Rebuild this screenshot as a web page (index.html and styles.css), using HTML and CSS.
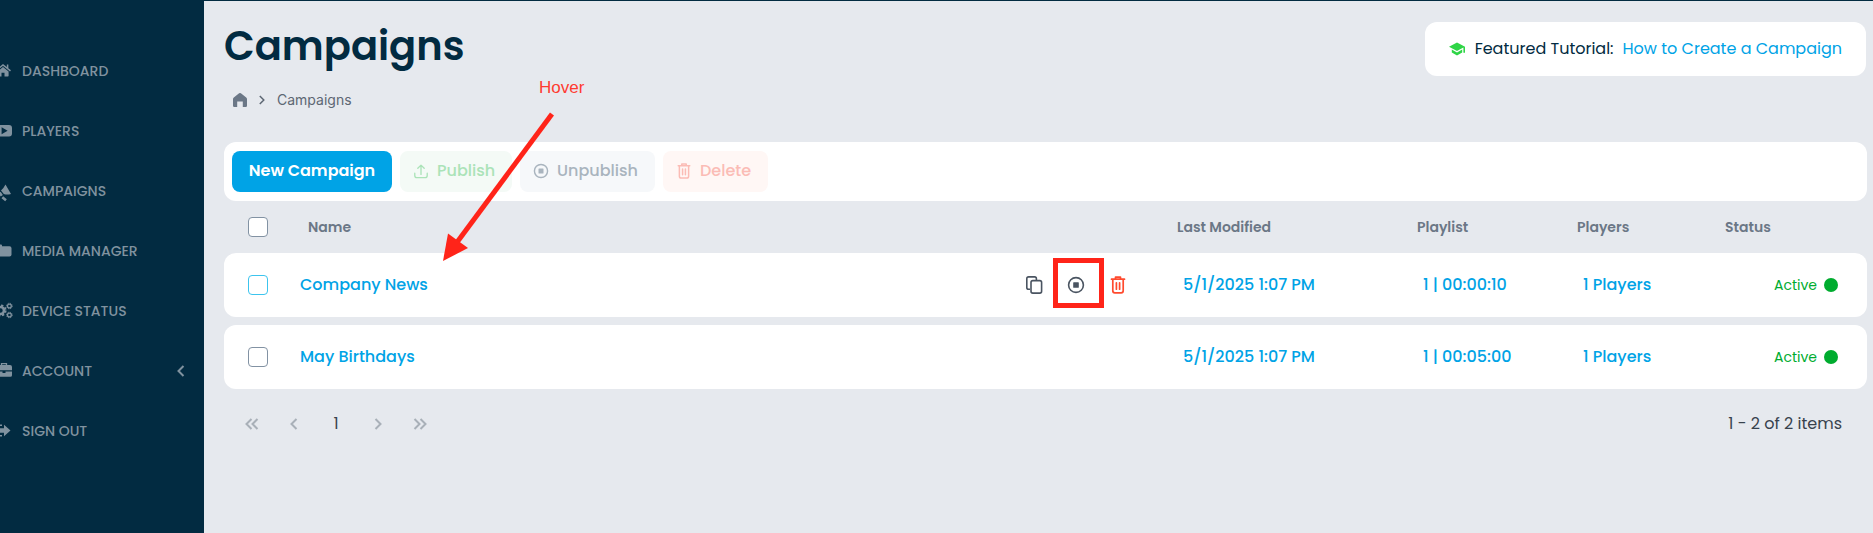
FILE: index.html
```html
<!DOCTYPE html>
<html lang="en">
<head>
<meta charset="utf-8">
<meta name="viewport" content="width=device-width, initial-scale=1">
<title>Campaigns</title>
<link rel="stylesheet" href="styles.css">
</head>
<body>
<svg width="0" height="0" class="sprite" aria-hidden="true">
  <symbol id="i-stop" viewBox="0 0 18 18"><circle cx="9" cy="9" r="7.4" fill="none" stroke="currentColor" stroke-width="1.6"/><rect x="6.2" y="6.2" width="5.6" height="5.6" rx=".6" fill="currentColor"/></symbol>
  <symbol id="i-trash" viewBox="0 0 18 18"><path d="M2.500 3.200h13M6.500 2.400V1.200h5v1.200M3.800 3.400v11.400a2 2 0 0 0 2 2h6.400a2 2 0 0 0 2-2V3.400M7.400 6.800v6.400M10.600 6.800v6.400" fill="none" stroke="currentColor" stroke-width="1.700" stroke-linecap="round" stroke-linejoin="round"/></symbol>
  <symbol id="i-copy" viewBox="0 0 18 18"><path d="M5 13.200H3.600a1.800 1.800 0 0 1-1.800-1.800V2.700A1.800 1.800 0 0 1 3.600.9h6a1.800 1.800 0 0 1 1.800 1.800v1.500" fill="none" stroke="currentColor" stroke-width="1.600"/><rect x="6" y="4.600" width="10.600" height="12.500" rx="1.800" fill="none" stroke="currentColor" stroke-width="1.600"/></symbol>
  <symbol id="i-upload" viewBox="0 0 18 18"><path d="M2 11.500v2.500a2.500 2.500 0 0 0 2.500 2.500h9a2.500 2.500 0 0 0 2.500-2.500v-2.500M9 12.800V2.500M5.400 6 9 2.400 12.600 6" fill="none" stroke="currentColor" stroke-width="1.500" stroke-linecap="round" stroke-linejoin="round"/></symbol>
  <symbol id="i-left" viewBox="0 0 18 18"><path d="M11.500 4 6.500 9l5 5" fill="none" stroke="currentColor" stroke-width="2"/></symbol>
  <symbol id="i-right" viewBox="0 0 18 18"><path d="m6.500 4 5 5-5 5" fill="none" stroke="currentColor" stroke-width="2"/></symbol>
  <symbol id="i-first" viewBox="0 0 18 18"><path d="M8.500 4l-5 5 5 5M14.500 4l-5 5 5 5" fill="none" stroke="currentColor" stroke-width="2"/></symbol>
  <symbol id="i-last" viewBox="0 0 18 18"><path d="m3.500 4 5 5-5 5M9.500 4l5 5-5 5" fill="none" stroke="currentColor" stroke-width="2"/></symbol>
</svg>
<div class="app">
  <nav class="sidebar" aria-label="Main">
    <a class="nav-item" href="#"><svg class="nav-icon" viewBox="0 0 18 16"><path d="M9 4 3.600 8.600V12.700q0 .7.700.700H7.500v-3.700h3v3.700h3.400q.7 0 .7-.7V8.600z"/><path d="m1.800 7.800L9 1.900l7.500 6M13.600 1.500V5" fill="none" stroke="currentColor" stroke-width="1.500"/></svg>DASHBOARD</a>
    <a class="nav-item" href="#"><svg class="nav-icon" viewBox="0 0 18 16"><path fill-rule="evenodd" d="M3 2h12a3 3 0 0 1 3 3v5.400a3 3 0 0 1-3 3H3a3 3 0 0 1-3-3V5a3 3 0 0 1 3-3zM7.600 4.200v7l6-3.500z"/></svg>PLAYERS</a>
    <a class="nav-item" href="#"><svg class="nav-icon" viewBox="0 0 18 16"><path d="M11.500 1.500 17 11Q13 12 9.800 11L7 7.500Q9.500 5.500 11.500 1.500z"/><path d="M5.500 9.500l2.300 3.200M8.300 14.300l3.700 3" fill="none" stroke="currentColor" stroke-width="2.600"/></svg>CAMPAIGNS</a>
    <a class="nav-item" href="#"><svg class="nav-icon" viewBox="0 0 18 16"><path d="M2 1.500h5q1 0 1 1v.7h7.500a2 2 0 0 1 2 2v6.300a2 2 0 0 1-2 2H2a2 2 0 0 1-2-2v-8a2 2 0 0 1 2-2z"/></svg>MEDIA MANAGER</a>
    <a class="nav-item" href="#"><svg class="nav-icon nav-icon-wide" viewBox="0 0 19 16"><g fill="none" stroke="currentColor"><circle cx="6.500" cy="7.500" r="3.500" stroke-width="2.600"/><circle cx="6.500" cy="7.500" r="5.200" stroke-width="1.800" stroke-dasharray="2.300 1.780"/><circle cx="15.400" cy="3" r="1.900" stroke-width="1.300"/><circle cx="15.400" cy="3" r="2.800" stroke-width="1" stroke-dasharray="1.200 1"/><circle cx="15.400" cy="12" r="1.900" stroke-width="1.300"/><circle cx="15.400" cy="12" r="2.800" stroke-width="1" stroke-dasharray="1.200 1"/></g></svg>DEVICE STATUS</a>
    <a class="nav-item" href="#"><svg class="nav-icon" viewBox="0 0 18 16"><path d="M7.500 2V.6h5V2" fill="none" stroke="currentColor" stroke-width="1.300"/><path d="M2 2h14a2 2 0 0 1 2 2v3.200H0V4a2 2 0 0 1 2-2zM0 8.400h8.500v1.600h3V8.400H18v3.800a1.600 1.600 0 0 1-1.600 1.600H1.600A1.600 1.600 0 0 1 0 12.200z"/></svg>ACCOUNT<svg class="nav-caret" viewBox="0 0 18 18"><use href="#i-left"/></svg></a>
    <a class="nav-item" href="#"><svg class="nav-icon" viewBox="0 0 18 16"><path d="M10 1.800 16.500 7.500l-6.500 5.700v-3.500H4V5.300h6z"/><path d="M8 2.300H2.500v10.500H8" fill="none" stroke="currentColor" stroke-width="1.600"/></svg>SIGN OUT</a>
  </nav>
  <main class="main">
    <header class="page-head">
      <div>
        <h1 class="title">Campaigns</h1>
        <nav class="crumbs" aria-label="Breadcrumb">
          <a class="crumb-home" href="#" aria-label="Home"><svg width="14" height="14" viewBox="0 0 14 14"><path d="M7 0q.5 0 .9.300L13.200 4.500q.8.600.8 1.600v6.700q0 1.200-1.200 1.200H9.800V8.600H4.200V14h-3Q0 14 0 12.800V6.100q0-1 .8-1.600L6.100.3Q6.500 0 7 0z" fill="currentColor"/></svg></a>
          <svg class="crumb-sep" viewBox="0 0 6 10"><path d="m.8 1 4 4-4 4" fill="none" stroke="currentColor" stroke-width="1.500"/></svg>
          <span>Campaigns</span>
        </nav>
      </div>
      <div class="tutorial">
        <svg class="tutorial-icon" viewBox="0 0 16 14"><path d="M8 .5 0 4.800l8 4.300 6.400-3.500v5.100H16V4.800zM2.800 7.500v3L8 13.500l5.200-3v-3L8 10.400z" fill="currentColor"/></svg>
        <span>Featured Tutorial:</span>
        <a href="#">How to Create a Campaign</a>
      </div>
    </header>
    <div class="toolbar">
      <button class="btn btn-new" type="button">New Campaign</button>
      <button class="btn btn-publish" type="button" disabled><svg class="btn-icon"><use href="#i-upload"/></svg>Publish</button>
      <button class="btn btn-unpublish" type="button" disabled><svg class="btn-icon"><use href="#i-stop"/></svg>Unpublish</button>
      <button class="btn btn-delete" type="button" disabled><svg class="btn-icon"><use href="#i-trash"/></svg>Delete</button>
    </div>
    <table class="grid">
      <colgroup><col class="c-check"><col><col class="c-actions"><col class="c-modified"><col class="c-playlist"><col class="c-players"><col class="c-status"></colgroup>
      <thead>
        <tr><th class="check"><input type="checkbox" aria-label="Select all"></th><th class="name">Name</th><th></th><th>Last Modified</th><th>Playlist</th><th>Players</th><th>Status</th></tr>
      </thead>
      <tbody>
        <tr>
          <td class="check"><input class="is-hover" type="checkbox" aria-label="Select Company News"></td>
          <td class="name"><a href="#">Company News</a></td>
          <td class="actions"><div class="action-list">
            <button class="action" type="button" aria-label="Copy"><svg><use href="#i-copy"/></svg></button>
            <button class="action marked" type="button" aria-label="Unpublish"><svg><use href="#i-stop"/></svg></button>
            <button class="action danger" type="button" aria-label="Delete"><svg><use href="#i-trash"/></svg></button>
          </div></td>
          <td>5/1/2025 1:07 PM</td><td>1 | 00:00:10</td><td>1 Players</td>
          <td class="status"><span class="active">Active</span></td>
        </tr>
        <tr>
          <td class="check"><input type="checkbox" aria-label="Select May Birthdays"></td>
          <td class="name"><a href="#">May Birthdays</a></td>
          <td></td>
          <td>5/1/2025 1:07 PM</td><td>1 | 00:05:00</td><td>1 Players</td>
          <td class="status"><span class="active">Active</span></td>
        </tr>
      </tbody>
    </table>
    <footer class="pager">
      <div class="pages">
        <button class="page" type="button" disabled aria-label="First page"><svg><use href="#i-first"/></svg></button>
        <button class="page" type="button" disabled aria-label="Previous page"><svg><use href="#i-left"/></svg></button>
        <button class="page current" type="button">1</button>
        <button class="page" type="button" disabled aria-label="Next page"><svg><use href="#i-right"/></svg></button>
        <button class="page" type="button" disabled aria-label="Last page"><svg><use href="#i-last"/></svg></button>
      </div>
      <span>1 - 2 of 2 items</span>
    </footer>
    <span class="note">Hover</span>
    <svg class="arrow" viewBox="0 0 112 150" aria-hidden="true"><path d="M110 2 13 133" stroke="currentColor" stroke-width="5"/><path d="M1 149 6 121.500 26 136z" fill="currentColor"/></svg>
  </main>
</div>
</body>
</html>
```
FILE: styles.css
```css
* { box-sizing: border-box; }
body {
  margin: 0;
  background: #e6e9ee;
  color: #022b41;
  font: 16px/24px Poppins, Inter, "Open Sans", sans-serif;
}
a { color: #00a3e6; text-decoration: none; }
svg { flex: none; }
.sprite { position: absolute; }
.app {
  display: grid;
  grid-template-columns: 204px minmax(0, 1fr);
  min-height: 100vh;
  border-top: 1px solid #022b41;
}

.sidebar { background: #022b41; padding-top: 40px; overflow: hidden; }
.nav-item {
  display: flex;
  align-items: center;
  height: 60px;
  padding-right: 14px;
  color: #80929f;
  font-size: 14px;
  font-weight: 500;
}
.nav-icon { width: 18px; height: 16px; margin: 0 10px 0 -6px; fill: currentColor; overflow: visible; }
.nav-icon-wide { width: 19px; margin-right: 9px; }
.nav-caret { width: 18px; height: 18px; margin-left: auto; }

.main { position: relative; padding: 21px 6px 20px 20px; }
.page-head { display: flex; justify-content: space-between; align-items: flex-start; }
.title { margin: 0; font-size: 40px; line-height: 48px; font-weight: 600; }
.crumbs {
  display: flex;
  align-items: center;
  gap: 12px;
  height: 72px;
  padding: 0 9px 12px;
  color: #5d6773;
  font: 14px/20px Inter, sans-serif;
}
.crumb-home { display: flex; color: #6b7786; }
.crumb-sep { width: 6px; height: 10px; }
.tutorial {
  display: flex;
  align-items: center;
  gap: 9px;
  height: 54px;
  margin-right: 1px;
  padding: 0 24px;
  border-radius: 12px;
  background: #fff;
  white-space: nowrap;
}
.tutorial-icon { width: 16px; height: 14px; margin-right: 1px; color: #2fd546; }

.toolbar {
  display: flex;
  gap: 8px;
  padding: 9px 8px;
  border-radius: 12px;
  background: #fff;
}
.btn {
  display: flex;
  align-items: center;
  gap: 8px;
  height: 41px;
  padding: 0 13px 2px;
  border: 0;
  border-radius: 8px;
  font: inherit;
  font-weight: 500;
}
.btn-icon { width: 16px; height: 16px; }
.btn-new { justify-content: center; width: 160px; background: #00a3e6; color: #fff; font-weight: 600; }
.btn-publish { width: 112px; background: #f4faf6; color: #abe3b8; }
.btn-unpublish { width: 135px; background: #f6f8fa; color: #a9b4be; }
.btn-delete { width: 105px; background: #fff7f5; color: #fbbcb5; }

.grid { width: 100%; table-layout: fixed; border-collapse: separate; border-spacing: 0 8px; }
.c-check { width: 68px; }
.c-actions { width: 160px; }
.c-modified { width: 240px; }
.c-playlist { width: 160px; }
.c-players { width: 148px; }
.c-status { width: 150px; }
.grid th {
  height: 36px;
  padding: 0 8px;
  color: #6b7786;
  font-size: 14px;
  font-weight: 600;
  text-align: left;
}
.grid td { height: 64px; padding: 0 14px; background: #fff; color: #00a3e6; font-weight: 500; }
.grid td:first-child { border-radius: 12px 0 0 12px; }
.grid td:last-child { border-radius: 0 12px 12px 0; }
.grid th.name { padding-left: 16px; }
.grid td.name { padding-left: 8px; }
.grid .check { padding: 0 24px; }
.check input {
  appearance: none;
  display: block;
  width: 20px;
  height: 20px;
  margin: 0;
  border: 1px solid #8292a3;
  border-radius: 4px;
  background: #fff;
}
.check .is-hover { border-color: #3cc4ee; }
.grid td.actions { padding: 0; }
.action-list { display: flex; justify-content: flex-end; padding-right: 30px; }
.action {
  position: relative;
  display: grid;
  place-items: center;
  width: 42px;
  height: 42px;
  padding: 0;
  border: 0;
  background: none;
  color: #4a5461;
}
.action svg { width: 18px; height: 18px; }
.action.danger { color: #ff4a2e; }
.marked::after {
  content: "";
  position: absolute;
  inset: -6px -7px -2px -2px;
  border: 5px solid #ff2419;
}
.grid .status { padding-right: 29px; text-align: right; }
.active {
  display: inline-flex;
  align-items: center;
  gap: 7px;
  color: #00ac2f;
  font-size: 14px;
  font-weight: 400;
}
.active::after { content: ""; width: 14px; height: 14px; border-radius: 50%; background: #00ac2f; }

.pager {
  display: flex;
  align-items: center;
  justify-content: space-between;
  height: 54px;
  padding: 0 25px 0 7px;
  color: #38424d;
}
.pages { display: flex; }
.page {
  display: grid;
  place-items: center;
  width: 42px;
  height: 42px;
  padding: 0;
  border: 0;
  background: none;
  color: #a9b0b8;
  font: inherit;
}
.page svg { width: 18px; height: 18px; }
.page.current { color: #38424d; }

.note {
  position: absolute;
  left: 335px;
  top: 75px;
  color: #ff3b30;
  font: 17px/24px "Liberation Sans", Arial, sans-serif;
}
.arrow { position: absolute; left: 238px; top: 111px; width: 112px; height: 150px; color: #ff2419; pointer-events: none; }
```
